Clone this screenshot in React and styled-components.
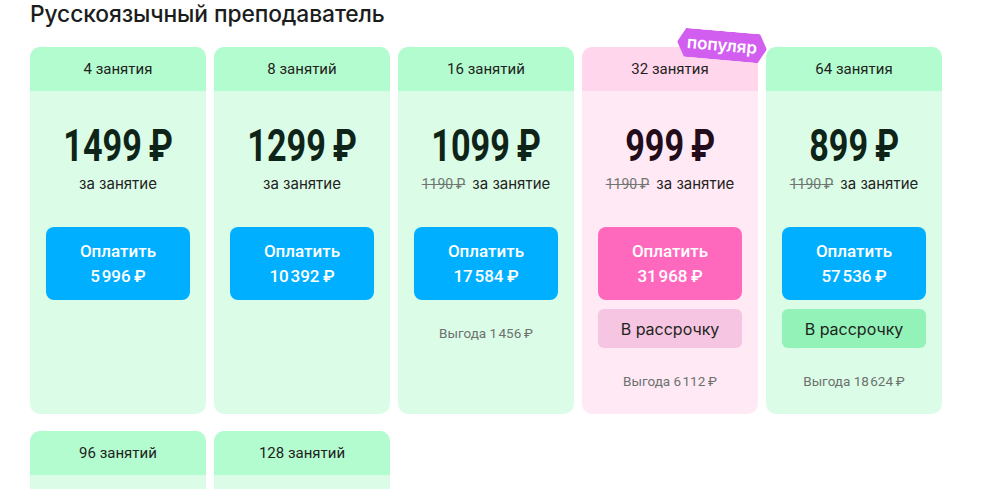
import React from "react";
import styled, { createGlobalStyle } from "styled-components";

const GlobalStyle = createGlobalStyle`
  body {
    margin: 0;
    background: #ffffff;
    font-family: "Inter", "Roboto", sans-serif;
    color: #1c1f1d;
  }
`;

const narrow = `"Roboto", "Liberation Sans", sans-serif`;

const Page = styled.div`
  height: 489px;
  overflow: hidden;
  padding: 0 0 0 30px;
`;

const Title = styled.h2`
  margin: 0;
  padding-top: 1px;
  font-size: 22.8px;
  line-height: 26px;
  font-weight: 500;
  color: #1b1d1c;
  letter-spacing: -0.1px;
`;

const Grid = styled.div`
  margin-top: 20px;
  display: grid;
  grid-template-columns: repeat(5, 176px);
  column-gap: 8px;
  row-gap: 17px;
`;

const Card = styled.div`
  position: relative;
  min-height: 367px;
  border-radius: 10px;
  background: ${(p) => (p.pink ? "#ffe9f5" : "#dbfde8")};
  display: flex;
  flex-direction: column;
`;

const Head = styled.div`
  height: 44px;
  border-radius: 10px 10px 0 0;
  background: ${(p) => (p.pink ? "#ffd6ec" : "#b3fccf")};
  display: flex;
  align-items: center;
  justify-content: center;
  font-family: ${narrow};
  font-size: 15px;
  color: #1f2320;
`;

const Body = styled.div`
  padding: 30px 16px 20px;
  display: flex;
  flex-direction: column;
  align-items: stretch;
`;

const PriceRow = styled.div`
  height: 50px;
  display: flex;
  justify-content: center;
  align-items: center;
`;

const Price = styled.span`
  display: inline-block;
  white-space: nowrap;
  font-family: ${narrow};
  font-weight: 700;
  font-size: 45px;
  line-height: 50px;
  transform: scaleX(0.76);
  color: ${(p) => (p.pink ? "#230d1a" : "#0f2418")};
`;

const Per = styled.div`
  margin-top: 3px;
  font-size: 15px;
  line-height: 20px;
  text-align: center;
  color: #1f2220;
  display: flex;
  justify-content: center;
  gap: 7px;
  white-space: nowrap;
`;

const Old = styled.span`
  font-family: ${narrow};
  font-size: 14px;
  color: #6f7571;
  text-decoration: line-through;
`;

const Pay = styled.button`
  margin-top: 33px;
  height: 73px;
  border: 0;
  border-radius: 8px;
  background: ${(p) => (p.pink ? "#ff69bd" : "#00afff")};
  color: #ffffff;
  font-family: ${narrow};
  font-weight: 500;
  font-size: 17px;
  line-height: 25px;
  padding: 0;
  display: flex;
  flex-direction: column;
  align-items: center;
  justify-content: center;
  cursor: pointer;
`;

const Installment = styled.button`
  margin-top: 9px;
  height: 39px;
  border: 0;
  border-radius: 6px;
  background: ${(p) => (p.pink ? "#f5c5e1" : "#93f2b8")};
  color: #1d2420;
  font-family: "Inter", "Roboto", sans-serif;
  font-size: 16px;
  padding: 0;
  cursor: pointer;
`;

const Benefit = styled.div`
  margin-top: 25px;
  font-family: ${narrow};
  font-size: 13.5px;
  line-height: 16px;
  text-align: center;
  color: #6d716e;
`;

const Badge = styled.div`
  position: absolute;
  left: 95px;
  top: -16px;
  width: 90px;
  height: 29px;
  transform: rotate(5deg);
  background: #d25ef0;
  clip-path: polygon(9% 0, 91% 0, 100% 50%, 91% 100%, 9% 100%, 0 50%);
  display: flex;
  align-items: center;
  justify-content: center;
  color: #ffffff;
  font-size: 17px;
  font-weight: 600;
  padding-bottom: 2px;
  box-sizing: border-box;
`;

const plans = [
  { count: "4 занятия", price: "1499", total: "5 996" },
  { count: "8 занятий", price: "1299", total: "10 392" },
  { count: "16 занятий", price: "1099", total: "17 584", old: true, benefit: "1 456" },
  { count: "32 занятия", price: "999", total: "31 968", old: true, benefit: "6 112", installment: true, pink: true, popular: true },
  { count: "64 занятия", price: "899", total: "57 536", old: true, benefit: "18 624", installment: true },
  { count: "96 занятий", price: "849", total: "81 504", old: true },
  { count: "128 занятий", price: "799", total: "102 272", old: true },
];

const rub = "\u2009₽";
const thin = (s) => s.replace(" ", "\u200A");

export default function App() {
  return (
    <Page>
      <GlobalStyle />
      <Title>Русскоязычный преподаватель</Title>
      <Grid>
        {plans.map((p) => (
          <Card key={p.count} pink={p.pink}>
            {p.popular && <Badge>популяр</Badge>}
            <Head pink={p.pink}>{p.count}</Head>
            <Body>
              <PriceRow>
                <Price pink={p.pink}>
                  {p.price}
                  {rub}
                </Price>
              </PriceRow>
              <Per>
                {p.old && <Old>1190{rub}</Old>}
                <span>за занятие</span>
              </Per>
              <Pay pink={p.pink}>
                <span>Оплатить</span>
                <span>
                  {thin(p.total)}
                  {rub}
                </span>
              </Pay>
              {p.installment && <Installment pink={p.pink}>В рассрочку</Installment>}
              {p.benefit && (
                <Benefit>
                  Выгода {thin(p.benefit)}
                  {rub}
                </Benefit>
              )}
            </Body>
          </Card>
        ))}
      </Grid>
    </Page>
  );
}
